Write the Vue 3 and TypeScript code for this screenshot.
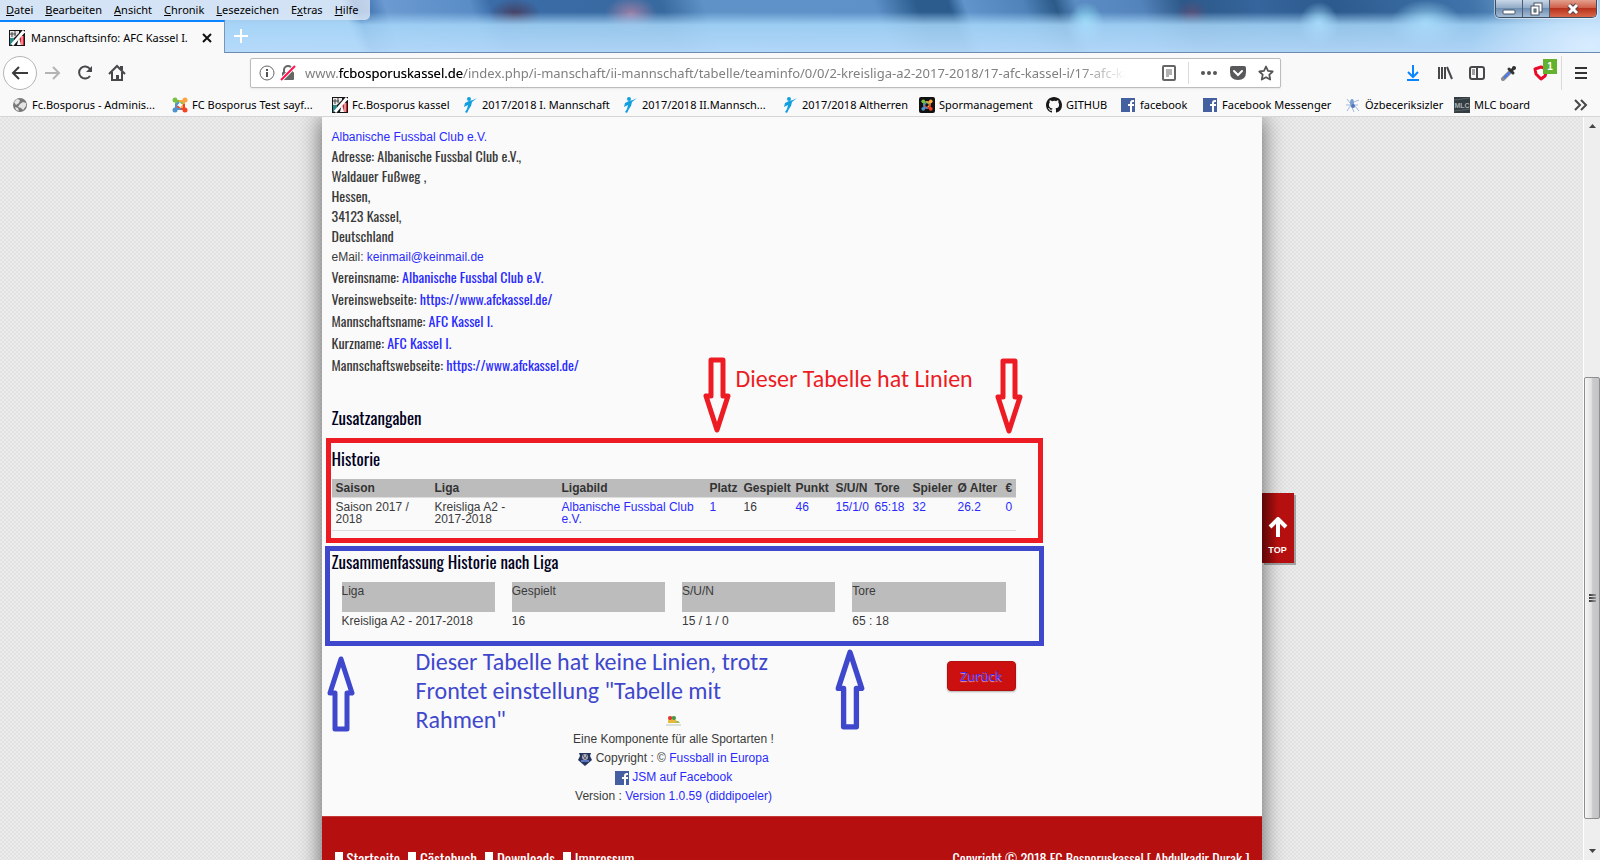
<script setup lang="ts">
import { ref } from 'vue'

interface Bookmark { label: string; icon: string; width: number }
interface Field { label: string; value: string; href: string }
interface Column { label: string; width: number; value: string; link: boolean }

const menus: [string, string, string][] = [
  ['', 'D', 'atei'], ['', 'B', 'earbeiten'], ['', 'A', 'nsicht'], ['', 'C', 'hronik'],
  ['', 'L', 'esezeichen'], ['E', 'x', 'tras'], ['', 'H', 'ilfe'],
]

const bookmarks: Bookmark[] = [
  { label: 'Fc.Bosporus - Adminis...', icon: 'globe', width: 160 },
  { label: 'FC Bosporus Test sayf...', icon: 'joomla', width: 160 },
  { label: 'Fc.Bosporus kassel', icon: 'club', width: 130 },
  { label: '2017/2018 I. Mannschaft', icon: 'runner', width: 160 },
  { label: '2017/2018 II.Mannsch...', icon: 'runner', width: 160 },
  { label: '2017/2018 Altherren', icon: 'runner', width: 137 },
  { label: 'Spormanagement', icon: 'joomla-dark', width: 127 },
  { label: 'GITHUB', icon: 'github', width: 74 },
  { label: 'facebook', icon: 'facebook', width: 82 },
  { label: 'Facebook Messenger', icon: 'facebook', width: 143 },
  { label: 'Özbeceriksizler', icon: 'spider', width: 109 },
  { label: 'MLC board', icon: 'mlc', width: 90 },
]

const address: string[] = ['Adresse: Albanische Fussbal Club e.V.,', 'Waldauer Fußweg ,', 'Hessen,', '34123 Kassel,', 'Deutschland']

const fields: Field[] = [
  { label: 'Vereinsname:', value: 'Albanische Fussbal Club e.V.', href: '#verein' },
  { label: 'Vereinswebseite:', value: 'https://www.afckassel.de/', href: '#vereinsseite' },
  { label: 'Mannschaftsname:', value: 'AFC Kassel I.', href: '#mannschaft' },
  { label: 'Kurzname:', value: 'AFC Kassel I.', href: '#kurzname' },
  { label: 'Mannschaftswebseite:', value: 'https://www.afckassel.de/', href: '#mannschaftsseite' },
]

const columns: Column[] = [
  { label: 'Saison', width: 99, value: 'Saison 2017 /\n2018', link: false },
  { label: 'Liga', width: 127, value: 'Kreisliga A2 -\n2017-2018', link: false },
  { label: 'Ligabild', width: 148, value: 'Albanische Fussbal Club e.V.', link: true },
  { label: 'Platz', width: 34, value: '1', link: true },
  { label: 'Gespielt', width: 52, value: '16', link: false },
  { label: 'Punkt', width: 40, value: '46', link: true },
  { label: 'S/U/N', width: 39, value: '15/1/0', link: true },
  { label: 'Tore', width: 38, value: '65:18', link: true },
  { label: 'Spieler', width: 45, value: '32', link: true },
  { label: 'Ø Alter', width: 48, value: '26.2', link: true },
  { label: '€', width: 14, value: '0', link: true },
]

const summary: [string, string][] = [
  ['Liga', 'Kreisliga A2 - 2017-2018'], ['Gespielt', '16'], ['S/U/N', '15 / 1 / 0'], ['Tore', '65 : 18'],
]

const footerLinks: string[] = ['Startseite', 'Gästebuch', 'Downloads', 'Impressum']
const host = 'www.fcbosporuskassel.de'
const url = ref('www.fcbosporuskassel.de/index.php/i-manschaft/ii-mannschaft/tabelle/teaminfo/0/0/2-kreisliga-a2-2017-2018/17-afc-kassel-i/17-afc-kassel')
</script>

<template>
  <div class="browser">
    <svg class="defs" aria-hidden="true">
      <symbol id="i-club" viewBox="0 0 16 16">
        <rect width="16" height="16" fill="#151515" />
        <path d="M1 1h9v2L5 8H1z" fill="#e8e8e8" />
        <path d="M3 2v5M6 1v5M1 4h6" stroke="#444" stroke-width="1" />
        <path d="M1 8h4v3l-3 4H1z" fill="#2b8a8a" />
        <path d="M11 6h4v9h-4z" fill="#d81e28" />
        <path d="M15 1L3 15" stroke="#fff" stroke-width="3" />
        <path d="M8 15l2-8 2 8z" fill="#fff" />
        <path d="M13 6v9" stroke="#fff" stroke-width="1" />
      </symbol>
      <symbol id="i-globe" viewBox="0 0 16 16">
        <circle cx="8" cy="8" r="7" fill="#777" />
        <path d="M2 5l3-3 3 1-1 3-3 2zM8 7l3-2 3 1v3l-3 4-2-2-3-1zM3 10l3 1 1 3-3-1z" fill="#e4e4e4" />
      </symbol>
      <symbol id="i-joomla" viewBox="0 0 16 16">
        <g fill="none" stroke-width="2">
          <path d="M4 9V5l1-1h3l3 3" stroke="#7ac143" />
          <path d="M7 4h4l1 1v3l-3 3" stroke="#f9a541" />
          <path d="M12 7v4l-1 1H8L5 9" stroke="#f44321" />
          <path d="M9 12H5l-1-1V8l3-3" stroke="#5091cd" />
        </g>
        <circle cx="3" cy="3" r="2.500" fill="#7ac143" /><circle cx="13" cy="3" r="2.500" fill="#f9a541" />
        <circle cx="13" cy="13" r="2.500" fill="#f44321" /><circle cx="3" cy="13" r="2.500" fill="#5091cd" />
      </symbol>
      <symbol id="i-joomla-dark" viewBox="0 0 16 16">
        <rect width="16" height="16" rx="2" fill="#111" />
        <use href="#i-joomla" x="2" y="2" width="12" height="12" />
      </symbol>
      <symbol id="i-runner" viewBox="0 0 16 16">
        <circle cx="7" cy="2" r="2" fill="#129fe0" />
        <path d="M15 1l-5 4-1 4-2 3-2 4-2-1 2-3 1-4-4 2 1-4 4-2 4-1z" fill="#129fe0" />
      </symbol>
      <symbol id="i-github" viewBox="0 0 16 16">
        <path fill="#191717" d="M8 0C3.58 0 0 3.58 0 8c0 3.54 2.29 6.53 5.47 7.59.4.07.55-.17.55-.38 0-.19-.01-.82-.01-1.49-2.01.37-2.53-.49-2.69-.94-.09-.23-.48-.94-.82-1.13-.28-.15-.68-.52-.01-.53.63-.01 1.08.58 1.23.82.72 1.21 1.87.87 2.33.66.07-.52.28-.87.51-1.07-1.78-.2-3.64-.89-3.64-3.95 0-.87.31-1.59.82-2.15-.08-.2-.36-1.02.08-2.12 0 0 .67-.21 2.2.82A7.6 7.6 0 0 1 8 3.86c.68 0 1.36.09 2 .27 1.53-1.04 2.2-.82 2.2-.82.44 1.1.16 1.92.08 2.12.51.56.82 1.27.82 2.15 0 3.07-1.87 3.75-3.65 3.95.29.25.54.73.54 1.48 0 1.07-.01 1.93-.01 2.2 0 .21.15.46.55.38A8.01 8.01 0 0 0 16 8c0-4.42-3.58-8-8-8z" />
      </symbol>
      <symbol id="i-facebook" viewBox="0 0 16 16">
        <rect x="1" y="1" width="14" height="14" fill="#4460a0" />
        <path d="M10 15V9h-2V7h2V6q0-3 3-3h1v2h-1q-1 0-1 1v1h2v2h-2v6z" fill="#fff" />
      </symbol>
      <symbol id="i-spider" viewBox="0 0 16 16">
        <ellipse cx="7" cy="6" rx="2" ry="4" fill="#7d9fd0" />
        <path d="M2 2l3 4M1 8h12M2 14l4-6 3 7M9 5l5-2M9 8l5 6" stroke="#9db8dd" stroke-width="1" fill="none" />
        <circle cx="8" cy="9" r="2" fill="#4f78b8" />
      </symbol>
      <symbol id="i-mlc" viewBox="0 0 16 16">
        <rect width="16" height="16" fill="#333c40" />
        <path d="M0 3l16-2M0 14l16-2" stroke="#56636a" />
        <text x="8" y="11" text-anchor="middle" font-family="Liberation Sans, Arial, sans-serif" font-size="7" font-weight="bold" fill="#a8b0b4">MLC</text>
      </symbol>
      <symbol id="i-down-arrow" viewBox="0 0 28 76">
        <path d="M8 3h12v36h5l-11 34L3 39h5z" fill="none" stroke="currentColor" stroke-width="5" stroke-linejoin="round" />
      </symbol>
    </svg>

    <header class="chrome">
      <div class="titlebar">
        <nav class="menubar">
          <button v-for="m in menus" :key="m[1]" type="button">{{ m[0] }}<u>{{ m[1] }}</u>{{ m[2] }}</button>
        </nav>
        <div class="window-buttons">
          <button type="button" class="min" aria-label="Minimieren"><svg width="14" height="14" viewBox="0 0 14 14"><rect x="1" y="8" width="12" height="4" rx="1" fill="#fff" stroke="#4a5566" /></svg></button>
          <button type="button" class="restore" aria-label="Verkleinern"><svg width="14" height="14" viewBox="0 0 14 14"><rect x="5" y="1" width="8" height="9" fill="#fff" stroke="#4a5566" /><rect x="2" y="4" width="8" height="9" fill="#fff" stroke="#4a5566" /><rect x="5" y="7" width="2" height="3" fill="#8aa" stroke="#4a5566" /></svg></button>
          <button type="button" class="close" aria-label="Schließen"><svg width="14" height="14" viewBox="0 0 14 14"><path d="M3 3l8 8M11 3l-8 8" stroke="#5a4048" stroke-width="5" /><path d="M3 3l8 8M11 3l-8 8" stroke="#fff" stroke-width="3" /></svg></button>
        </div>
      </div>

      <div class="tabs">
        <div class="tab">
          <svg width="16" height="16"><use href="#i-club" /></svg>
          <span>Mannschaftsinfo: AFC Kassel I.</span>
          <button type="button" aria-label="Tab schließen"><svg width="12" height="12" viewBox="0 0 12 12"><path d="M2 2l8 8M10 2l-8 8" stroke="#111" stroke-width="2" /></svg></button>
        </div>
        <button type="button" class="new-tab" aria-label="Neuer Tab"><svg width="16" height="16" viewBox="0 0 16 16"><path d="M8 1v14M1 8h14" stroke="#fff" stroke-width="2" /></svg></button>
      </div>

      <div class="navbar">
        <div class="nav-left">
          <button type="button" class="back" aria-label="Zurückblättern"><svg width="18" height="18" viewBox="0 0 18 18"><path d="M17 9H2M8 3L2 9l6 6" fill="none" stroke="#3b3b3d" stroke-width="2" /></svg></button>
          <button type="button" aria-label="Vor"><svg width="18" height="18" viewBox="0 0 18 18"><path d="M1 9h14M9 3l6 6-6 6" fill="none" stroke="#b4b4b4" stroke-width="2" /></svg></button>
          <button type="button" aria-label="Neu laden"><svg width="18" height="18" viewBox="0 0 18 18"><path d="M14 12a6 6 0 1 1 0-7" fill="none" stroke="#48484a" stroke-width="2" /><path d="M16 2v6h-6z" fill="#48484a" /></svg></button>
          <button type="button" aria-label="Startseite"><svg width="18" height="18" viewBox="0 0 18 18"><path d="M1 10l8-8 8 8M4 8v8h10V8" fill="none" stroke="#48484a" stroke-width="2" /><path d="M12 2h3v4h-3zM8 11h3v5H8z" fill="#48484a" /></svg></button>
        </div>
        <div class="urlbar">
          <svg width="16" height="16" viewBox="0 0 16 16"><circle cx="8" cy="8" r="7" fill="none" stroke="#666" stroke-width="1" /><path d="M8 7v5M8 4v2" stroke="#555" stroke-width="2" /></svg>
          <svg class="lock" width="16" height="16" viewBox="0 0 16 16"><path d="M4 7V5a4 4 0 0 1 8 0v2" fill="none" stroke="#666" stroke-width="2" /><rect x="2" y="7" width="12" height="8" rx="1" fill="#666" /><path d="M15 1L1 15" stroke="#fff" stroke-width="4" /><path d="M15 1L1 15" stroke="#ff0f4b" stroke-width="2" /></svg>
          <label class="url-field">
            <input v-model="url" type="text" aria-label="Adresse" />
            <span class="url-host" aria-hidden="true"><i>www.</i>{{ host.slice(4) }}</span>
          </label>
          <button type="button" aria-label="Leseansicht"><svg width="16" height="16" viewBox="0 0 16 16"><rect x="2" y="1" width="12" height="14" rx="1" fill="none" stroke="#666" stroke-width="2" /><path d="M5 5h6M5 7h6M5 9h6M5 11h3" stroke="#666" /></svg></button>
          <i class="divider"></i>
          <button type="button" aria-label="Seitenaktionen"><svg width="18" height="16" viewBox="0 0 18 16"><circle cx="3" cy="8" r="2" fill="#555" /><circle cx="9" cy="8" r="2" fill="#555" /><circle cx="15" cy="8" r="2" fill="#555" /></svg></button>
          <button type="button" aria-label="Pocket"><svg width="18" height="16" viewBox="0 0 18 16"><path d="M1 3q0-2 2-2h12q2 0 2 2v4q0 8-8 8T1 7z" fill="#58585a" /><path d="M5 6l4 4 4-4" fill="none" stroke="#fff" stroke-width="2" stroke-linecap="round" /></svg></button>
          <button type="button" aria-label="Lesezeichen setzen"><svg width="16" height="16" viewBox="0 0 16 16"><path d="M8 1.500l2 4.400 4.700.600-3.400 3.200.9 4.800L8 12.200l-4.200 2.300.9-4.800L1.300 6.500 6 5.900z" fill="none" stroke="#555" stroke-width="1.800" stroke-linejoin="round" /></svg></button>
        </div>
        <div class="nav-right">
          <button type="button" aria-label="Downloads"><svg width="16" height="18" viewBox="0 0 16 18"><path d="M8 1v11M3 8l5 5 5-5M2 16h12" fill="none" stroke="#0a84ff" stroke-width="2" /></svg></button>
          <button type="button" aria-label="Bibliothek"><svg width="16" height="16" viewBox="0 0 16 16"><path d="M2 2v12M5 2v12M8 2v12M10 2l5 12" stroke="#48484a" stroke-width="2" /></svg></button>
          <button type="button" aria-label="Seitenleiste"><svg width="16" height="16" viewBox="0 0 16 16"><rect x="1" y="2" width="14" height="12" rx="2" fill="none" stroke="#48484a" stroke-width="2" /><path d="M8 2v12" stroke="#48484a" stroke-width="2" /><path d="M3 5h3M3 7h3M3 9h3" stroke="#48484a" /></svg></button>
          <button type="button" aria-label="Pipette"><svg width="16" height="16" viewBox="0 0 16 16"><path d="M10 6L2 14" stroke="#8a8a92" stroke-width="4" stroke-linecap="round" /><path d="M9 7l-6 6" stroke="#4a78f0" stroke-width="2" /><path d="M8 4l4 4M11 5l2-2" stroke="#333" stroke-width="3" stroke-linecap="round" /><circle cx="13" cy="3" r="2" fill="#333" /></svg></button>
          <button type="button" class="adblock" aria-label="Werbeblocker"><svg width="16" height="16" viewBox="0 0 16 16"><path d="M2 4l6-2 6 2-2 7-4 3-5-5z" fill="#fff" stroke="#ea0a2a" stroke-width="3" stroke-linejoin="round" /></svg><span class="badge">1</span></button>
          <i class="divider tall"></i>
          <button type="button" aria-label="Menü"><svg width="14" height="16" viewBox="0 0 14 16"><path d="M1 3h12M1 8h12M1 13h12" stroke="#333" stroke-width="2" /></svg></button>
        </div>
      </div>

      <nav class="bookmarks">
        <a v-for="b in bookmarks" :key="b.label" href="#bm" :style="{ width: b.width + 'px' }">
          <svg width="16" height="16"><use :href="'#i-' + b.icon" /></svg><span>{{ b.label }}</span>
        </a>
        <button type="button" aria-label="Weitere Lesezeichen"><svg width="14" height="14" viewBox="0 0 14 14"><path d="M1 2l5 5-5 5M7 2l5 5-5 5" fill="none" stroke="#48484a" stroke-width="2" /></svg></button>
      </nav>
    </header>

    <div class="viewport">
      <div class="page">
        <main class="sheet">
          <div class="content">
            <section class="info">
              <p class="plain"><a href="#club">Albanische Fussbal Club e.V.</a></p>
              <p v-for="line in address" :key="line" class="addr">{{ line }}</p>
              <p class="plain mail">eMail: <a href="#mail">keinmail@keinmail.de</a></p>
              <p v-for="f in fields" :key="f.label" class="field">{{ f.label }} <a :href="f.href">{{ f.value }}</a></p>
            </section>

            <h2 class="extra">Zusatzangaben</h2>

            <section class="history">
              <h2>Historie</h2>
              <table>
                <colgroup><col v-for="c in columns" :key="c.label" :style="{ width: c.width + 'px' }" /></colgroup>
                <thead><tr><th v-for="c in columns" :key="c.label" scope="col">{{ c.label }}</th></tr></thead>
                <tbody>
                  <tr>
                    <td v-for="c in columns" :key="c.label"><a v-if="c.link" href="#h">{{ c.value }}</a><template v-else>{{ c.value }}</template></td>
                  </tr>
                </tbody>
              </table>
            </section>

            <section class="totals">
              <h2>Zusammenfassung Historie nach Liga</h2>
              <table>
                <thead><tr><th v-for="s in summary" :key="s[0]" scope="col">{{ s[0] }}</th></tr></thead>
                <tbody><tr><td v-for="s in summary" :key="s[0]">{{ s[1] }}</td></tr></tbody>
              </table>
            </section>

            <div class="actions"><button type="button">Zurück</button></div>

            <section class="credits">
              <svg width="16" height="14" viewBox="0 0 16 14"><path d="M2 8q0-6 5-6l5 7H2z" fill="#e8b83a" /><circle cx="4" cy="4" r="2" fill="#d33" /><circle cx="8" cy="4" r="2" fill="#3a9a4a" /><path d="M9 8l3-1 2 2z" fill="#5bb040" /><path d="M0 11h15" stroke="#b9c5b9" stroke-width="1" /></svg>
              <p>Eine Komponente für alle Sportarten !</p>
              <p><svg width="14" height="14" viewBox="0 0 14 14"><path d="M1 1h12l-1 3 2 4-7 6-7-6 2-4z" fill="#26345e" /><circle cx="7" cy="5" r="3" fill="#a8aebe" /><path d="M5 4h1M8 4h1M6 6h2" stroke="#222" /><path d="M3 9h8" stroke="#5a78c0" stroke-width="2" /></svg> Copyright : © <a href="#europa">Fussball in Europa</a></p>
              <p><svg width="14" height="14" viewBox="1 1 14 14"><use href="#i-facebook" width="16" height="16" /></svg> <a href="#jsm">JSM auf Facebook</a></p>
              <p>Version : <a href="#version">Version 1.0.59 (diddipoeler)</a></p>
            </section>

            <aside class="notes">
              <svg class="arrow red a1"><use href="#i-down-arrow" /></svg>
              <svg class="arrow red a2"><use href="#i-down-arrow" /></svg>
              <svg class="arrow blue a3"><use href="#i-down-arrow" /></svg>
              <svg class="arrow blue a4"><use href="#i-down-arrow" /></svg>
              <p class="note red n1">Dieser Tabelle hat Linien</p>
              <p class="note blue n2">Dieser Tabelle hat keine Linien, trotz<br />Frontet einstellung "Tabelle mit<br />Rahmen"</p>
              <i class="frame red f1"></i>
              <i class="frame blue f2"></i>
            </aside>
          </div>

          <footer>
            <nav><a v-for="l in footerLinks" :key="l" href="#footer">{{ l }}</a></nav>
            <span>Copyright © 2018 FC Bosporuskassel [ Abdulkadir Durak ]</span>
          </footer>

          <a class="to-top" href="#top"><svg width="20" height="20" viewBox="0 0 20 20"><path d="M10 20V3M2 10l8-8 8 8" fill="none" stroke="#fff" stroke-width="4" /></svg>TOP</a>
        </main>
      </div>

      <div class="scrollbar" aria-hidden="true">
        <svg width="7" height="4" viewBox="0 0 7 4"><path d="M0 4l3.500-4L7 4z" fill="#444" /></svg>
        <div class="track"><div class="thumb"><i></i><i></i><i></i></div></div>
        <svg width="7" height="4" viewBox="0 0 7 4"><path d="M0 0l3.500 4L7 0z" fill="#444" /></svg>
      </div>
    </div>
  </div>
</template>

<style>
body { margin: 0; overflow: hidden; }
</style>

<style scoped>
.browser { height: 100vh; display: flex; flex-direction: column; overflow: hidden; font: 11px/16px "Noto Sans", "Open Sans", sans-serif; color: #000; }
.defs { position: absolute; width: 0; height: 0; }
button { border: 0; padding: 0; background: none; font: inherit; color: inherit; display: flex; align-items: center; justify-content: center; }
svg { flex: none; }
a { color: #2a2aff; text-decoration: none; }
p, h2 { margin: 0; }

/* window chrome */
.chrome {
  background:
    radial-gradient(ellipse 120px 60px at 1590px 46px, #d9ecff, transparent),
    linear-gradient(transparent 12px, rgba(168, 216, 250, .84) 25px, rgba(184, 220, 252, .92) 52px, transparent 52px),
    radial-gradient(ellipse 18px 22px at 1086px 24px, #8fdcf4, transparent),
    radial-gradient(ellipse 20px 22px at 1319px 24px, #9fdcfa, transparent),
    radial-gradient(ellipse 36px 24px at 1426px 24px, #9fdcfa, transparent),
    radial-gradient(ellipse 26px 16px at 515px 14px, #453f62, transparent),
    radial-gradient(ellipse 26px 18px at 631px 14px, #9a7fa6, transparent),
    radial-gradient(ellipse 16px 14px at 1192px 14px, #57507a, transparent),
    linear-gradient(70deg, #a9c8e8 0, #9cc0e6 360px, #2f62a2 372px, #6a9ad0 400px, #5a8cc6 480px, #3a6ca8 500px, #38699f 660px, #5f93c8 700px, #5d91c8 860px, #2c5c8e 900px, #2c5c8e 930px, #6094ca 945px, #4f83ba 1000px, #2c5a88 1030px, #5b8dc4 1050px, #5484bc 1110px, #2d5888 1150px, #35659c 1220px, #2d5a8e 1290px, #3f74aa 1420px, #98c0e6 1530px);
}
.titlebar { height: 20px; display: flex; justify-content: space-between; align-items: flex-start; }
.menubar { display: flex; gap: 12px; height: 20px; padding: 0 12px 0 6px; background: rgba(225, 236, 248, .78); border-radius: 0 0 5px 0; }
.menubar u { text-underline-offset: 1px; }
.window-buttons { display: flex; margin-right: 3px; height: 17px; border: 1px solid #3d4e63; border-top: 0; border-radius: 0 0 5px 5px; box-shadow: 0 0 0 1px rgba(255, 255, 255, .5); overflow: hidden; }
.window-buttons button { width: 27px; background: linear-gradient(#c8d7e8, #93acc8 45%, #6f8fb2 50%, #a5bdd6); border-right: 1px solid #4a5d75; }
.window-buttons .close { width: 46px; border: 0; background: linear-gradient(#e3a08e, #d0604a 45%, #b8321c 50%, #d8674a); }
.tabs { height: 32px; display: flex; border-bottom: 1px solid #6d8bb0; }
.tab { width: 225px; box-sizing: border-box; height: 33px; padding: 0 11px 0 9px; display: flex; align-items: center; gap: 6px; background: #f9f9fa; border-top: 2px solid #0a84ff; border-right: 1px solid #7a95b5; }
.tab span { flex: 1; white-space: nowrap; }
.new-tab { width: 32px; height: 32px; }
.navbar { height: 40px; display: flex; align-items: center; background: #f9f9fa; }
.nav-left { width: 250px; box-sizing: border-box; padding-left: 3px; display: flex; align-items: center; gap: 14px; }
.nav-left button { width: 18px; }
.nav-left .back { width: 34px; height: 34px; box-sizing: border-box; border: 1px solid #b5b5b5; border-radius: 50%; background: #fff; margin-right: -7px; }
.urlbar { flex: 1; height: 30px; box-sizing: border-box; border: 1px solid #bcbcbc; border-radius: 2px; background: #fff; display: flex; align-items: center; gap: 11px; padding: 0 6px 0 8px; box-shadow: 0 1px 2px rgba(0, 0, 0, .08); }
.urlbar .lock { margin-left: -6px; }
.url-field { position: relative; flex: 1; min-width: 0; margin-left: -2px; font-size: 13px; line-height: 22px; -webkit-mask-image: linear-gradient(90deg, #000 0, #000 calc(100% - 70px), transparent calc(100% - 24px)); mask-image: linear-gradient(90deg, #000 0, #000 calc(100% - 70px), transparent calc(100% - 24px)); }
.url-field input { display: block; width: 100%; border: 0; padding: 0; outline: 0; background: none; font: inherit; color: #808080; height: 22px; }
.url-host { position: absolute; left: 0; top: 0; color: #000; pointer-events: none; }
.url-host i { font-style: normal; color: transparent; }
.divider { width: 1px; height: 22px; background: #dadada; }
.divider.tall { height: 34px; }
.nav-right { width: 319px; box-sizing: border-box; padding-right: 12px; display: flex; align-items: center; justify-content: flex-end; gap: 16px; }
.adblock { position: relative; }
.nav-right .tall { margin: 0 -4px 0 -4px; }
.badge { position: absolute; left: 10px; top: -6px; width: 14px; height: 15px; background: #62b22f; color: #fff; font: bold 10px/15px "Liberation Sans", Arial, sans-serif; text-align: center; }
.bookmarks { height: 24px; box-sizing: border-box; display: flex; align-items: center; padding: 0 12px; background: #f9f9fa; border-bottom: 1px solid #d5d5d8; }
.bookmarks a { flex: none; display: flex; gap: 4px; align-items: center; color: #000; white-space: nowrap; }
.bookmarks button { margin-left: auto; }

/* page */
.viewport { flex: 1; min-height: 0; display: flex; }
.page { flex: 1; min-width: 0; overflow: hidden; background: #e8e8e8 conic-gradient(#e3e3e3 25%, #ebebeb 0 50%, #e3e3e3 0 75%, #ebebeb 0) 0 0 / 4px 4px; }
.sheet { position: relative; width: 940px; max-width: 100%; margin: 0 auto; background: #fafafa; box-shadow: 0 0 22px rgba(0, 0, 0, .6); }
.content { position: relative; box-sizing: border-box; min-height: 699px; padding: 11px 246px 10px 10px; font: 12px/19px "Liberation Sans", Arial, sans-serif; color: #3a3a3a; }
.content h2, .addr, .field { font-family: Oswald, "Roboto Condensed", sans-serif; }
.plain { line-height: 18px; }
.mail { padding-top: 2px; }
.addr { font-size: 14px; line-height: 20px; }
.field { font-size: 14px; line-height: 22px; }
.content h2 { font-size: 17px; line-height: 26px; font-weight: 400; color: #000022; }
.content .extra { margin-top: 29px; }
.history { margin-top: 15px; }
table { border-collapse: collapse; border-spacing: 0; table-layout: fixed; width: 100%; }
th { text-align: left; }
.history table { margin-top: 7px; }
.history th { background: #bcbcbc; height: 18px; line-height: 18px; padding: 0 0 0 4px; white-space: nowrap; color: #333; }
.history td { height: 29px; padding: 3px 0 0 4px; line-height: 12px; vertical-align: top; white-space: pre-line; border-top: 1px solid #ddd; border-bottom: 1px solid #ddd; }
.totals { margin-top: 18px; }
.totals table { width: calc(100% + 14px); margin: 7px 0 0 -7px; border-collapse: separate; border-spacing: 17px 0; }
.totals th { background: #bcbcbc; height: 30px; padding: 0; font-weight: 400; vertical-align: top; line-height: 18px; }
.totals td { padding: 0; line-height: 18px; }
.actions { display: flex; justify-content: flex-end; margin-top: 31px; }
.actions button { width: 69px; height: 30px; box-sizing: border-box; border: 1px solid #b01010; border-radius: 4px; background: #cc1010; color: #3a2aff; font: 13px/20px "Noto Sans", "Open Sans", sans-serif; text-shadow: 0 1px 1px rgba(255, 255, 255, .6); box-shadow: 0 1px 2px rgba(0, 0, 0, .3); }
.credits { text-align: center; margin-top: 23px; }
.credits svg { vertical-align: middle; }
.credits > svg { display: block; margin: 0 auto 2px; }

/* annotations drawn over the page */
.notes i, .notes p, .notes svg { position: absolute; }
.red { color: #ed1c24; }
.blue { color: #3f48cc; }
.frame { box-sizing: border-box; border: 5px solid currentColor; }
.f1 { left: 4px; top: 321px; width: 717px; height: 105px; }
.f2 { left: 3px; top: 429px; width: 719px; height: 100px; }
.note { font: 24px/29px Carlito, Calibri, Lato, sans-serif; white-space: nowrap; }
.n1 { left: 414px; top: 247px; }
.n2 { left: 94px; top: 530px; }
.arrow { width: 28px; height: 76px; }
.a1 { left: 381px; top: 240px; }
.a2 { left: 673px; top: 241px; }
.a3 { left: 5px; top: 539px; transform: rotate(180deg); }
.arrow.a4 { left: 513px; top: 532px; width: 30px; height: 81px; transform: rotate(180deg); }

footer { display: flex; justify-content: space-between; align-items: flex-start; height: 120px; box-sizing: border-box; padding: 30px 12px 0 13px; background: #b50f0f; border-top: 1px solid #c43a3a; color: #fff; font: 14px/22px Oswald, "Roboto Condensed", sans-serif; }
footer nav { display: flex; gap: 8px; }
footer a { color: #fff; display: flex; align-items: center; gap: 4px; font-size: 15px; }
footer a::before { content: ""; width: 8px; height: 12px; background: #fff; }
.to-top { position: absolute; left: 100%; top: 376px; width: 32px; height: 70px; box-sizing: border-box; padding-top: 24px; display: flex; flex-direction: column; align-items: center; gap: 7px; background: linear-gradient(90deg, #5c0606, #b50f0f 16px); box-shadow: 2px 2px 0 rgba(0, 0, 0, .3); color: #fff; font: bold 9px/12px "Liberation Sans", Arial, sans-serif; }

.scrollbar { width: 17px; box-sizing: border-box; padding: 7px 0; display: flex; flex-direction: column; align-items: center; background: #eee; border-left: 1px solid #fff; }
.track { flex: 1; width: 100%; box-sizing: border-box; padding-top: 249px; padding-bottom: 30px; display: flex; }
.thumb { flex: 1; box-sizing: border-box; border: 1px solid #8e8e8e; border-radius: 2px; background: linear-gradient(90deg, #f6f6f6, #e2e2e2 45%, #cacacc 55%, #c4c4c8); display: flex; flex-direction: column; align-items: center; justify-content: center; gap: 1px; }
.thumb i { width: 7px; height: 2px; background: linear-gradient(90deg, #333, #999); }
</style>
